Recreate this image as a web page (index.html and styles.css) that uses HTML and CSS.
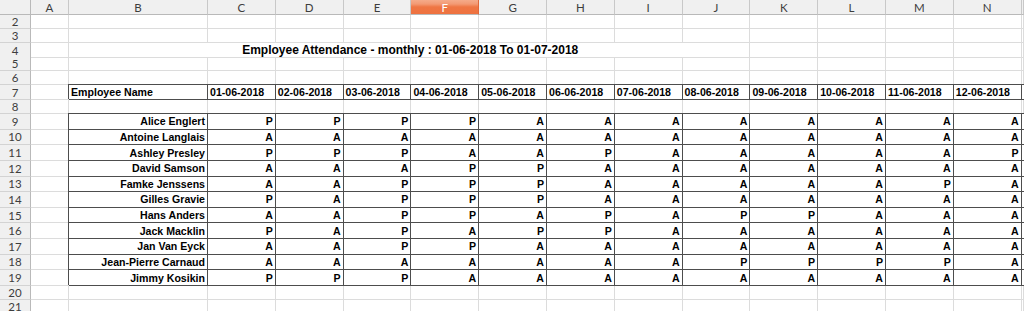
FILE: index.html
```html
<!DOCTYPE html>
<html>
<head>
<meta charset="utf-8">
<link rel="stylesheet" href="styles.css">
</head>
<body>
<div class="sheet">
  <div class="r hdr">
    <span class="rh corner"></span><span class="ch">A</span><span class="ch">B</span><span class="ch">C</span><span class="ch">D</span><span class="ch">E</span><span class="ch sel">F</span><span class="ch">G</span><span class="ch">H</span><span class="ch">I</span><span class="ch">J</span><span class="ch">K</span><span class="ch">L</span><span class="ch">M</span><span class="ch">N</span><span class="ch"></span>
  </div>
  <div class="r"><span class="rh">2</span><span></span><span></span><span></span><span></span><span></span><span></span><span></span><span></span><span></span><span></span><span></span><span></span><span></span><span></span><span></span></div>
  <div class="r"><span class="rh">3</span><span></span><span></span><span></span><span></span><span></span><span></span><span></span><span></span><span></span><span></span><span></span><span></span><span></span><span></span><span></span></div>
  <div class="r"><span class="rh">4</span><span></span><span class="title">Employee Attendance - monthly : 01-06-2018 To 01-07-2018</span><span></span><span></span><span></span><span></span><span></span></div>
  <div class="r"><span class="rh">5</span><span></span><span></span><span></span><span></span><span></span><span></span><span></span><span></span><span></span><span></span><span></span><span></span><span></span><span></span><span></span></div>
  <div class="r"><span class="rh">6</span><span></span><span></span><span></span><span></span><span></span><span></span><span></span><span></span><span></span><span></span><span></span><span></span><span></span><span></span><span></span></div>
  <div class="r h15"><span class="rh">7</span><span></span><span class="b th">Employee Name</span><span class="b th">01-06-2018</span><span class="b th">02-06-2018</span><span class="b th">03-06-2018</span><span class="b th">04-06-2018</span><span class="b th">05-06-2018</span><span class="b th">06-06-2018</span><span class="b th">07-06-2018</span><span class="b th">08-06-2018</span><span class="b th">09-06-2018</span><span class="b th">10-06-2018</span><span class="b th">11-06-2018</span><span class="b th">12-06-2018</span><span class="b th"></span></div>
  <div class="r"><span class="rh">8</span><span></span><span></span><span></span><span></span><span></span><span></span><span></span><span></span><span></span><span></span><span></span><span></span><span></span><span></span><span></span></div>
  <div class="r d"><span class="rh">9</span><span></span><span class="b v">Alice Englert</span><span class="b v">P</span><span class="b v">P</span><span class="b v">P</span><span class="b v">P</span><span class="b v">A</span><span class="b v">A</span><span class="b v">A</span><span class="b v">A</span><span class="b v">A</span><span class="b v">A</span><span class="b v">A</span><span class="b v">A</span><span class="b v"></span></div>
  <div class="r d"><span class="rh">10</span><span></span><span class="b v">Antoine Langlais</span><span class="b v">A</span><span class="b v">A</span><span class="b v">A</span><span class="b v">A</span><span class="b v">A</span><span class="b v">A</span><span class="b v">A</span><span class="b v">A</span><span class="b v">A</span><span class="b v">A</span><span class="b v">A</span><span class="b v">A</span><span class="b v"></span></div>
  <div class="r d"><span class="rh">11</span><span></span><span class="b v">Ashley Presley</span><span class="b v">P</span><span class="b v">P</span><span class="b v">P</span><span class="b v">A</span><span class="b v">A</span><span class="b v">P</span><span class="b v">A</span><span class="b v">A</span><span class="b v">A</span><span class="b v">A</span><span class="b v">A</span><span class="b v">P</span><span class="b v"></span></div>
  <div class="r d"><span class="rh">12</span><span></span><span class="b v">David Samson</span><span class="b v">A</span><span class="b v">A</span><span class="b v">A</span><span class="b v">P</span><span class="b v">P</span><span class="b v">A</span><span class="b v">A</span><span class="b v">A</span><span class="b v">A</span><span class="b v">A</span><span class="b v">A</span><span class="b v">A</span><span class="b v"></span></div>
  <div class="r d"><span class="rh">13</span><span></span><span class="b v">Famke Jenssens</span><span class="b v">A</span><span class="b v">A</span><span class="b v">P</span><span class="b v">P</span><span class="b v">P</span><span class="b v">A</span><span class="b v">A</span><span class="b v">A</span><span class="b v">A</span><span class="b v">A</span><span class="b v">P</span><span class="b v">A</span><span class="b v"></span></div>
  <div class="r d"><span class="rh">14</span><span></span><span class="b v">Gilles Gravie</span><span class="b v">P</span><span class="b v">A</span><span class="b v">P</span><span class="b v">P</span><span class="b v">P</span><span class="b v">A</span><span class="b v">A</span><span class="b v">A</span><span class="b v">A</span><span class="b v">A</span><span class="b v">A</span><span class="b v">A</span><span class="b v"></span></div>
  <div class="r d"><span class="rh">15</span><span></span><span class="b v">Hans Anders</span><span class="b v">A</span><span class="b v">A</span><span class="b v">P</span><span class="b v">P</span><span class="b v">A</span><span class="b v">P</span><span class="b v">A</span><span class="b v">P</span><span class="b v">P</span><span class="b v">A</span><span class="b v">A</span><span class="b v">A</span><span class="b v"></span></div>
  <div class="r d"><span class="rh">16</span><span></span><span class="b v">Jack Macklin</span><span class="b v">P</span><span class="b v">A</span><span class="b v">P</span><span class="b v">A</span><span class="b v">P</span><span class="b v">P</span><span class="b v">A</span><span class="b v">A</span><span class="b v">A</span><span class="b v">A</span><span class="b v">A</span><span class="b v">A</span><span class="b v"></span></div>
  <div class="r d"><span class="rh">17</span><span></span><span class="b v">Jan Van Eyck</span><span class="b v">A</span><span class="b v">A</span><span class="b v">P</span><span class="b v">P</span><span class="b v">A</span><span class="b v">A</span><span class="b v">A</span><span class="b v">A</span><span class="b v">A</span><span class="b v">A</span><span class="b v">A</span><span class="b v">A</span><span class="b v"></span></div>
  <div class="r d"><span class="rh">18</span><span></span><span class="b v">Jean-Pierre Carnaud</span><span class="b v">A</span><span class="b v">A</span><span class="b v">A</span><span class="b v">A</span><span class="b v">A</span><span class="b v">A</span><span class="b v">A</span><span class="b v">P</span><span class="b v">P</span><span class="b v">P</span><span class="b v">P</span><span class="b v">A</span><span class="b v"></span></div>
  <div class="r d"><span class="rh">19</span><span></span><span class="b v">Jimmy Kosikin</span><span class="b v">P</span><span class="b v">P</span><span class="b v">P</span><span class="b v">A</span><span class="b v">A</span><span class="b v">A</span><span class="b v">A</span><span class="b v">A</span><span class="b v">A</span><span class="b v">A</span><span class="b v">A</span><span class="b v">A</span><span class="b v"></span></div>
  <div class="r"><span class="rh">20</span><span></span><span></span><span></span><span></span><span></span><span></span><span></span><span></span><span></span><span></span><span></span><span></span><span></span><span></span><span></span></div>
  <div class="r"><span class="rh">21</span><span></span><span></span><span></span><span></span><span></span><span></span><span></span><span></span><span></span><span></span><span></span><span></span><span></span><span></span><span></span></div>
</div>
</body>
</html>
```
FILE: styles.css
```css
html, body {
  margin: 0;
  padding: 0;
  background: #ffffff;
}
body {
  width: 1024px;
  height: 311px;
  overflow: hidden;
}
.sheet {
  display: flex;
  flex-direction: column;
  font-family: "Liberation Sans", Arial, sans-serif;
  font-size: 10.6px;
  font-weight: bold;
  color: #000;
}
.r {
  display: grid;
  grid-template-columns: 31px 38px 139px repeat(12, 67.8px) 1fr;
  height: 14px;
  flex: none;
}
.r.hdr { height: 15px; }
.r.h15 { height: 15px; }
.r.d { height: 15.64px; }
.r > span {
  box-sizing: border-box;
  border-right: 1px solid #dcdcdc;
  border-bottom: 1px solid #dcdcdc;
  display: flex;
  align-items: center;
  white-space: nowrap;
  overflow: visible;
  min-width: 0;
}
.r > span.rh {
  background: #f0f0f0;
  border-right: 1px solid #b9b9b9;
  border-bottom: 1px solid #d3d3d3;
  justify-content: center;
  font-family: Lato, "DejaVu Sans", sans-serif;
  font-weight: normal;
  font-size: 11.5px;
  color: #3d3d3d;
}
.r.hdr > span.ch {
  background: #f0f0f0;
  border-right: 1px solid #c8c8c8;
  border-bottom: 1px solid #b9b9b9;
  justify-content: center;
  font-family: Lato, "DejaVu Sans", sans-serif;
  font-weight: normal;
  font-size: 11.5px;
  color: #3d3d3d;
}
.r.hdr > span.corner {
  border-bottom: 1px solid #b9b9b9;
}
.r.hdr > span.sel {
  background: linear-gradient(to bottom, #f5ab8a 0px, #f39a74 4px, #ef7644 7px, #ee7240 100%);
  color: #ffffff;
  border-right-color: #e0683a;
}
.r > span.title {
  grid-column: 3 / 12;
  justify-content: center;
  font-size: 12px;
  padding-left: 2px;
}
.r > span.b {
  border-right-color: #4d4d4d;
  border-bottom-color: #4d4d4d;
  box-shadow: -1px -1px 0 #4d4d4d;
}
.r > span.th {
  justify-content: flex-start;
  padding-left: 2px;
}
.r > span.v {
  justify-content: flex-end;
  padding-right: 2px;
}
```
